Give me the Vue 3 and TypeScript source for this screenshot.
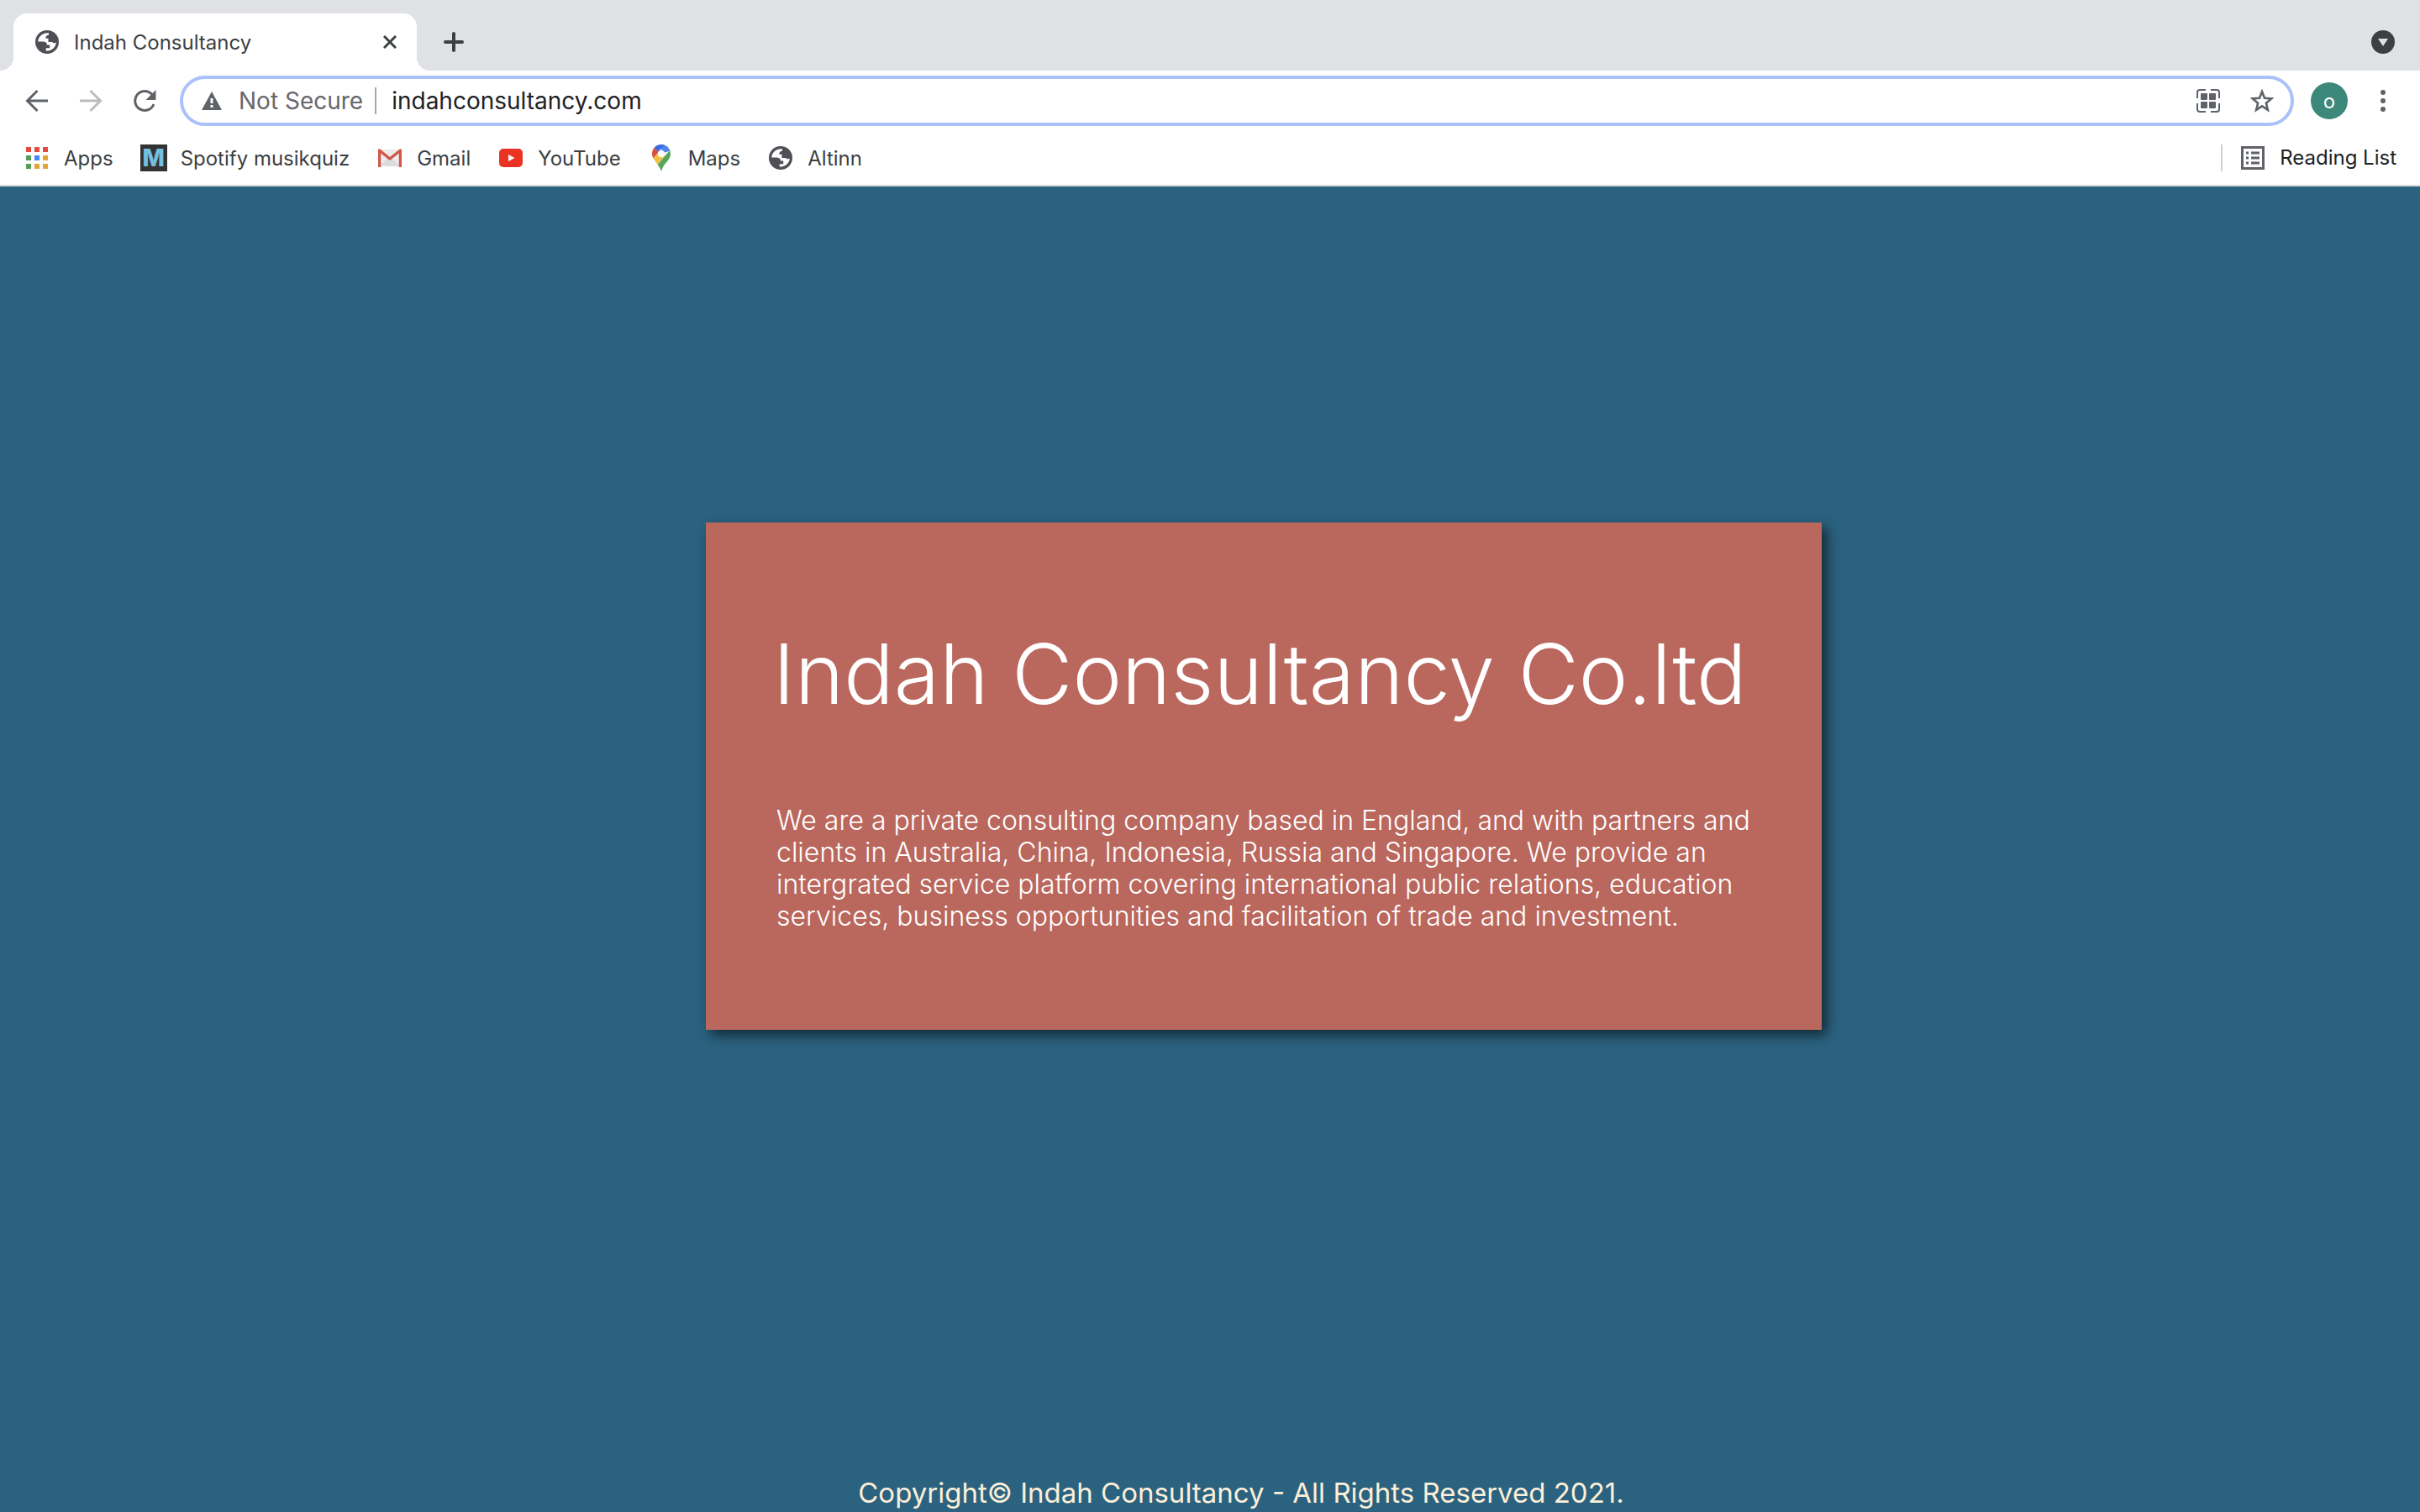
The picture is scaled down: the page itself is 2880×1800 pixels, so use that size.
<script setup lang="ts">
import { ref } from 'vue'

const address = ref('indahconsultancy.com')

const appColors = [
  '#e34b3f', '#e34b3f', '#e34b3f',
  '#549d5c', '#4287f5', '#e5a43a',
  '#549d5c', '#e5a43a', '#e5a43a',
]

const lines = [
  'We are a private consulting company based in England, and with partners and',
  'clients in Australia, China, Indonesia, Russia and Singapore. We provide an',
  'intergrated service platform covering international public relations, education',
  'services, business opportunities and facilitation of trade and investment.',
]
</script>

<template>
  <div class="window">
    <header class="chrome">
      <div class="tabstrip">
        <div class="tab">
          <svg class="i28" viewBox="0 0 28 28" aria-hidden="true">
            <circle cx="14" cy="14" r="14" fill="#4e5056" />
            <path d="M16 3.2C9 2.500 3.500 7.500 3.200 13.500H9c3 0 5 1.500 5 4h3.200v3.700h-4.500v3.400C19 25 24.500 20.500 24.800 14.500c-1.500 1.200-3.500 1-4.600-.5h-4.700V9.800h-3.200c0-2.500 1-4 3.700-4.100z" fill="#fff" />
          </svg>
          <span class="tab-title">Indah Consultancy</span>
          <button class="plain" aria-label="Close tab">
            <svg class="i16" viewBox="0 0 16 16"><path d="M1 1l14 14M15 1L1 15" stroke="#3c4043" stroke-width="3" /></svg>
          </button>
        </div>
        <button class="plain new-tab" aria-label="New tab">
          <svg class="i24" viewBox="0 0 24 24"><path d="M12 2v20M2 12h20" stroke="#3c4043" stroke-width="4" stroke-linecap="round" /></svg>
        </button>
        <button class="plain tab-search" aria-label="Search tabs">
          <svg class="i28" viewBox="0 0 28 28"><circle cx="14" cy="14" r="14" fill="#3c4043" /><path d="M8 10h12l-6 9z" fill="#dfe1e5" /></svg>
        </button>
      </div>

      <div class="toolbar">
        <nav class="nav" aria-label="History">
          <button class="plain" aria-label="Back">
            <svg class="i28" viewBox="0 0 28 28"><path d="M27 14H3M14.500 2L2.500 14l12 12" fill="none" stroke="#5f6368" stroke-width="3" /></svg>
          </button>
          <button class="plain" aria-label="Forward">
            <svg class="i28" viewBox="0 0 28 28"><path d="M1 14h24M13.500 2l12 12-12 12" fill="none" stroke="#babcbe" stroke-width="3" /></svg>
          </button>
          <button class="plain" aria-label="Reload">
            <svg class="i28" viewBox="0 0 28 28"><path d="M25 18A11.500 11.500 0 1 1 23 6.500" fill="none" stroke="#5f6368" stroke-width="3" /><path d="M27.500 1v12h-12z" fill="#5f6368" /></svg>
          </button>
        </nav>
        <div class="omnibox">
          <svg class="i24" viewBox="0 0 24 24" aria-hidden="true"><path d="M12 1l12 22H0z" fill="#5f6368" /><path d="M12 9v6M12 17v3" stroke="#fff" stroke-width="3" /></svg>
          <label class="secure" for="address">Not Secure</label>
          <input id="address" v-model="address" class="address" type="text" spellcheck="false" />
          <button class="plain" aria-label="QR code">
            <svg class="i28" viewBox="0 0 28 28"><path d="M1 11V4q0-3 3-3h7M17 1h7q3 0 3 3v7M27 17v7q0 3-3 3h-7M11 27H4q-3 0-3-3v-7" fill="none" stroke="#5f6368" stroke-width="2" /><g fill="#5f6368"><rect x="5" y="5" width="8" height="8" rx="1" /><rect x="15" y="5" width="8" height="8" rx="1" /><rect x="5" y="15" width="8" height="8" rx="1" /><rect x="15" y="15" width="8" height="8" rx="1" /></g></svg>
          </button>
          <button class="plain" aria-label="Bookmark this page">
            <svg class="i28" viewBox="0 0 28 28"><path d="M14 3l3 7.800 8.300.6-6.400 5.300 2 8.200L14 20.400l-6.900 4.500 2-8.200-6.400-5.300 8.300-.6z" fill="none" stroke="#5f6368" stroke-width="2.600" /></svg>
          </button>
        </div>
        <button class="plain avatar" aria-label="Profile">o</button>
        <button class="plain" aria-label="Menu">
          <svg class="i28" viewBox="0 0 28 28"><g fill="#5f6368"><circle cx="14" cy="4" r="3" /><circle cx="14" cy="14" r="3" /><circle cx="14" cy="24" r="3" /></g></svg>
        </button>
      </div>

      <nav class="bookmarks" aria-label="Bookmarks">
        <a href="#" class="mark">
          <span class="slot"><svg class="i28" viewBox="0 0 28 28"><rect v-for="(c, i) in appColors" :key="i" :x="1 + (i % 3) * 10" :y="1 + Math.floor(i / 3) * 10" width="6" height="6" :fill="c" /></svg></span>
          Apps
        </a>
        <a href="#" class="mark">
          <span class="slot mlogo" aria-hidden="true">M</span>
          Spotify musikquiz
        </a>
        <a href="#" class="mark">
          <span class="slot"><svg class="i28" viewBox="0 0 28 28"><path d="M1 4h26v20H1z" fill="#ececec" /><path d="M1 24l13-12 13 12z" fill="#dcdcdc" /><path d="M1.500 25V5L14 15 26.500 5v20" fill="none" stroke="#d2564a" stroke-width="3.400" stroke-linejoin="round" /></svg></span>
          Gmail
        </a>
        <a href="#" class="mark">
          <span class="slot"><svg class="i28" viewBox="0 0 28 28"><rect y="3" width="28" height="22" rx="5" fill="#ea3323" /><path d="M11 10l7.500 4-7.500 4z" fill="#fff" /></svg></span>
          YouTube
        </a>
        <a href="#" class="mark">
          <span class="slot">
            <svg class="pin" viewBox="0 0 22 32">
              <path d="M11 0a11 11 0 0 1 10.400 7.500L11 11z" fill="#5085ed" />
              <path d="M11 0C7.500 0 4.500 1.500 2.500 4l5 5L14.500.6C13.400.2 12.200 0 11 0z" fill="#3a6be0" />
              <path d="M2.500 4C0 7 0 10 0 11c0 2 .6 4 1.500 5.500L8 9z" fill="#d9503f" />
              <path d="M1.500 16.500C3 19.500 5 21.500 6.500 24L15 13.500 7.500 9.500z" fill="#f2c142" />
              <path d="M21 7L6.500 24c2.500 3.500 3.500 5 4.500 8 1-3 2.500-6.500 5-9.500C19 19 22 16 22 11c0-1.500-.4-2.800-1-4z" fill="#5aa55a" />
              <circle cx="11" cy="11" r="4.200" fill="#fff" />
            </svg>
          </span>
          Maps
        </a>
        <a href="#" class="mark">
          <span class="slot"><svg class="i28" viewBox="0 0 28 28">
            <circle cx="14" cy="14" r="14" fill="#4e5056" />
            <path d="M16 3.200C9 2.500 3.500 7.500 3.200 13.500H9c3 0 5 1.500 5 4h3.200v3.700h-4.500v3.400C19 25 24.500 20.500 24.800 14.500c-1.500 1.200-3.500 1-4.600-.5h-4.700V9.800h-3.200c0-2.500 1-4 3.700-4.100z" fill="#fff" />
          </svg></span>
          Altinn
        </a>
        <button class="plain reading">
          <svg class="i28" viewBox="0 0 28 28" aria-hidden="true"><rect x="1.500" y="1.500" width="25" height="25" fill="none" stroke="#5f6368" stroke-width="3" /><path d="M6 8h3M12 8h10M6 14h3M12 14h10M6 20h3M12 20h10" stroke="#5f6368" stroke-width="3" /></svg>
          Reading List
        </button>
      </nav>
    </header>

    <main class="page">
      <section class="card">
        <h1>Indah Consultancy Co.ltd</h1>
        <p><span v-for="line in lines" :key="line" class="line">{{ line }}</span></p>
      </section>
    </main>
    <footer class="foot">Copyright© Indah Consultancy - All Rights Reserved 2021.</footer>
  </div>
</template>

<style>
body {
  background: #2b627f;
}
</style>

<style scoped>
.window {
  display: flex;
  flex-direction: column;
  min-height: 100vh;
  background: #2b627f;
  font-family: Inter, "Liberation Sans", sans-serif;
}
svg {
  display: block;
  flex: none;
}
.i16 { width: 16px; height: 16px; }
.i24 { width: 24px; height: 24px; }
.i28 { width: 28px; height: 28px; }
.plain {
  display: flex;
  align-items: center;
  justify-content: center;
  flex: none;
  padding: 0;
  border: 0;
  background: none;
  font: inherit;
  color: inherit;
}
.chrome {
  background: #fff;
  border-bottom: 2px solid #d8dade;
}
.tabstrip {
  display: flex;
  align-items: center;
  box-sizing: border-box;
  height: 84px;
  padding: 16px 30px 0 16px;
  background: #dfe1e5;
}
.tab {
  position: relative;
  display: flex;
  align-items: center;
  box-sizing: border-box;
  width: 480px;
  height: 68px;
  padding: 0 24px 0 26px;
  border-radius: 16px 16px 0 0;
  background: #fff;
}
.tab::before,
.tab::after {
  content: "";
  position: absolute;
  bottom: 0;
  width: 16px;
  height: 16px;
}
.tab::before {
  right: 100%;
  background: radial-gradient(circle at 0 0, transparent 16px, #fff 16px);
}
.tab::after {
  left: 100%;
  background: radial-gradient(circle at 100% 0, transparent 16px, #fff 16px);
}
.tab-title {
  flex: 1;
  margin-left: 18px;
  font-size: 24px;
  color: #3c4043;
}
.new-tab { margin-left: 32px; }
.tab-search { margin-left: auto; }
.toolbar {
  display: flex;
  align-items: center;
  height: 72px;
  padding: 0 30px;
}
.nav {
  display: flex;
  gap: 36px;
}
.omnibox {
  display: flex;
  align-items: center;
  flex: 1;
  box-sizing: border-box;
  height: 60px;
  margin: 0 20px 0 28px;
  padding: 0 20px 0 22px;
  border: 4px solid #a9c2f9;
  border-radius: 30px;
  font-size: 28px;
  gap: 36px;
}
.secure {
  margin-left: -16px;
  padding-right: 14px;
  border-right: 2px solid #a5a7aa;
  line-height: 32px;
  color: #66686c;
}
.address {
  flex: 1;
  min-width: 0;
  margin-left: -18px;
  padding: 0;
  border: 0;
  outline: 0;
  background: none;
  font: inherit;
  color: #202124;
}
.avatar {
  width: 44px;
  height: 44px;
  margin-right: 28px;
  border-radius: 50%;
  background: #3c887a;
  color: #fff;
  font-size: 24px;
}
.bookmarks {
  display: flex;
  align-items: center;
  height: 64px;
  padding: 0 28px;
  gap: 32px;
  font-size: 24px;
  color: #3c4043;
}
.mark {
  display: flex;
  align-items: center;
  gap: 16px;
  color: inherit;
  text-decoration: none;
}
.slot {
  display: flex;
  justify-content: center;
  width: 32px;
}
.mlogo {
  background: #333;
  color: #74bfe0;
  font-size: 28px;
  font-weight: 800;
  line-height: 32px;
}
.pin {
  width: 22px;
  height: 32px;
}
.reading {
  gap: 18px;
  margin-left: auto;
  padding-left: 22px;
  border-left: 2px solid #cfd1d4;
  line-height: 32px;
  color: #202124;
}
.page {
  display: flex;
  flex: 1;
  align-items: flex-start;
  justify-content: center;
  padding: 400px 0 0 128px;
}
.card {
  box-sizing: border-box;
  width: 1328px;
  padding: 116px 72px 116px 84px;
  background: #ba675d;
  box-shadow: 6px 6px 14px rgba(0, 0, 0, 0.6);
  color: #fff;
}
h1 {
  margin: 0 0 92px -4px;
  font-size: 99px;
  font-weight: 300;
  line-height: 128px;
  white-space: nowrap;
}
p {
  margin: 0;
  font-size: 32px;
  font-weight: 350;
  line-height: 38px;
}
.line {
  display: block;
  white-space: nowrap;
}
.foot {
  padding: 0 0 4px 74px;
  color: #fcefd9;
  font-size: 33px;
  line-height: 38px;
  text-align: center;
}
</style>
